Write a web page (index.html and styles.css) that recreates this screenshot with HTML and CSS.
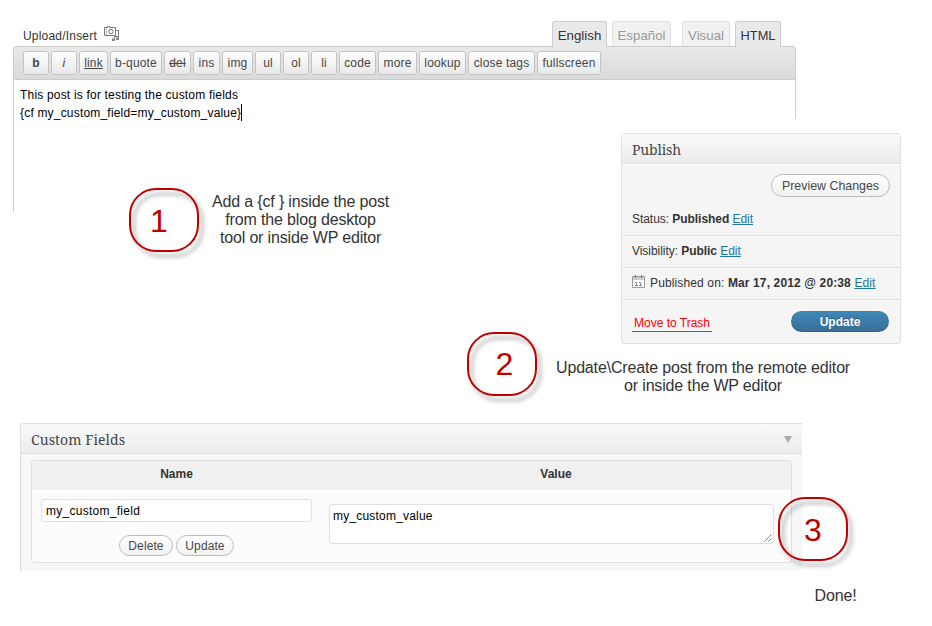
FILE: index.html
```html
<!DOCTYPE html>
<html lang="en">
<head>
<meta charset="utf-8">
<title>Custom fields</title>
<link rel="stylesheet" href="styles.css">
</head>
<body>
<section class="editor">
  <header class="editor-head">
    <div class="upload"><span class="upload-label">Upload/Insert</span>
      <svg class="media-icon" width="16" height="16" viewBox="0 0 16 16" fill="none" stroke="#777">
        <path d="M.5 1.500h3v-1h2v1h6v8h-11z"/><path d="M2.500 2v7" stroke="#bbb"/><circle cx="7" cy="5.500" r="2.200"/><path d="M12 4.500h2.500V13M10.500 14V10.500h4"/><path d="M8 12.500h3V15H8zM12 11.500h3V14h-3z" fill="#888" stroke="none"/>
      </svg>
    </div>
    <nav class="tabs">
      <a class="tab active t-en"><span>English</span></a><a class="tab t-es"><span>Español</span></a><a class="tab t-vis"><span>Visual</span></a><a class="tab active t-html"><span>HTML</span></a>
    </nav>
  </header>
  <div class="toolbar">
    <button class="q w26 bold"><span>b</span></button><button class="q w26 ital"><span>i</span></button><button class="q w29 under"><span>link</span></button><button class="q w52"><span>b-quote</span></button><button class="q w27 strike"><span>del</span></button><button class="q w27"><span>ins</span></button><button class="q w31"><span>img</span></button><button class="q w26"><span>ul</span></button><button class="q w26"><span>ol</span></button><button class="q w26"><span>li</span></button><button class="q w37"><span>code</span></button><button class="q w39"><span>more</span></button><button class="q w47"><span>lookup</span></button><button class="q w67"><span>close tags</span></button><button class="q w64"><span>fullscreen</span></button>
  </div>
  <div class="content">
    <div><span class="line1">This post is for testing the custom fields</span></div>
    <div><span class="line2">{cf my_custom_field=my_custom_value}</span><i class="caret"></i></div>
  </div>
</section>

<section class="middle">
  <div class="step-one">
    <div class="badge"><span>1</span></div>
    <p class="caption">Add a {cf } inside the post<br>from the blog desktop<br>tool or inside WP editor</p>
  </div>
  <aside class="publish">
    <h3><span>Publish</span></h3>
    <div class="row status">
      <button class="pill preview"><span>Preview Changes</span></button>
      <div><span class="s-status">Status: <b>Published</b> <a>Edit</a></span></div>
    </div>
    <div class="row"><span class="s-vis">Visibility: <b>Public</b> <a>Edit</a></span></div>
    <div class="row">
      <svg class="cal" width="13" height="13" viewBox="0 0 13 13"><path d="M.5 1.500h12v11H.5z" fill="#fff" stroke="#999"/><path d="M1 2h11v3H1z" fill="#ccc"/><path d="M3.500 0v3M9.500 0v3" stroke="#777"/><path d="M3 7.500h1.500V10M3 10.500h3M7 7.500h1.500V10M7 10.500h3" stroke="#888" fill="none"/></svg>
      <span class="s-pub">Published on: <b>Mar 17, 2012 @ 20:38</b> <a>Edit</a></span>
    </div>
    <div class="actions"><a class="trash"><span>Move to Trash</span></a><button class="primary"><span>Update</span></button></div>
  </aside>
  <div class="badge step-two"><span>2</span></div>
  <p class="caption caption-two"><span>Update\Create post from the remote editor</span><br>or inside the WP editor</p>
</section>

<section class="fields">
  <h3><span>Custom Fields</span><i class="toggle"></i></h3>
  <div class="table">
    <div class="th"><span>Name</span></div><div class="th"><span>Value</span></div>
    <div class="name-cell">
      <div class="input"><span>my_custom_field</span></div>
      <div class="buttons"><button class="pill delete"><span>Delete</span></button><button class="pill update"><span>Update</span></button></div>
    </div>
    <div class="value-cell">
      <div class="area"><span>my_custom_value</span><svg class="grip" width="8" height="8" viewBox="0 0 8 8"><path d="M.5 7.500l7-7M4.500 7.500l3-3" stroke="#555" stroke-dasharray="1.400 .5"/></svg></div>
    </div>
  </div>
  <div class="badge step-three"><span>3</span></div>
</section>
<p class="caption done">Done!</p>
</body>
</html>
```

FILE: styles.css
```css
* { box-sizing: border-box; }
body { margin: 0; width: 932px; height: 626px; overflow: hidden; background: #fff; color: #333; font: 12px/18px "Liberation Sans", Arial, sans-serif; }
p, h3 { margin: 0; }
button { font: inherit; color: inherit; padding: 0; margin: 0; }
span { white-space: nowrap; }

.editor { margin-left: 13px; width: 783px; height: 119px; padding-top: 21px; }
.editor-head { display: flex; justify-content: space-between; height: 25px; padding: 0 15px 0 10px; }
.upload { display: flex; gap: 7px; padding-top: 5px; }
.upload-label { letter-spacing: .2px; padding-top: 1px; }
.media-icon { display: block; }
.tabs { display: flex; }
.tab { height: 25px; border: 1px solid #dfdfdf; border-bottom: 0; border-radius: 3px 3px 0 0; background: #f1f1f1; color: #999; font-size: 13.3px; line-height: 27px; text-align: center; }
.tab.active { height: 26px; border-color: #ccc; background: #e9e9e9; color: #333; position: relative; }
.t-en { width: 55px; margin-right: 5px; }
.t-es { width: 59px; margin-right: 11px; }
.t-vis { width: 48px; margin-right: 5px; }
.t-html { width: 46px; }
.tab.t-html { font-size: 12.8px; }
.toolbar { display: flex; gap: 2px; height: 34px; padding: 4px 9px; border: 1px solid #ccc; border-radius: 3px 3px 0 0; background: linear-gradient(#e9e9e9, #dadada); }
.q { height: 24px; border: 1px solid #c3c3c3; border-radius: 3px; background: linear-gradient(#fff, #e8e8e8); color: #464646; line-height: 22px; letter-spacing: .17px; text-align: center; }
.w26 { width: 26px; } .w27 { width: 27px; } .w29 { width: 29px; } .w31 { width: 31px; } .w37 { width: 37px; }
.w39 { width: 39px; } .w47 { width: 47px; } .w52 { width: 52px; } .w64 { width: 64px; } .w67 { width: 67px; }
.bold { font-weight: bold; } .ital { font-style: italic; }
.under { text-decoration: underline; } .strike { text-decoration: line-through; }
.content { height: 39px; padding: 6px 6px 0; border: solid #ccc; border-width: 0 1px; color: #000; letter-spacing: .19px; }
.caret { display: inline-block; width: 1px; height: 17px; background: #000; vertical-align: middle; margin-top: -2px; }

.middle { position: relative; display: grid; grid-template-columns: 454px 89px 65px 280px; grid-template-rows: 212px 27px 65px; margin-left: 13px; height: 304px; }
.middle::before { content: ""; position: absolute; left: 0; top: 0; width: 1px; height: 94px; background: #ccc; }
.badge { position: relative; width: 70px; height: 64px; display: flex; justify-content: center; padding-right: 10px; color: #c00000; font-size: 32px; line-height: 67px; }
.badge::before { content: ""; position: absolute; inset: 0; border: 2px solid #c00000; border-radius: 27px; filter: drop-shadow(4px 5px 2px rgba(0,0,0,.38)); }
.caption { color: #333; font-size: 16px; line-height: 18px; letter-spacing: -.16px; text-align: center; }
.step-one { grid-area: 1 / 1; display: flex; gap: 13px; padding: 69px 0 0 116px; }
.step-one .caption { padding-top: 5px; }
.publish { grid-area: 1 / 4 / 3 / 5; margin-top: 14px; height: 211px; border: 1px solid #dfdfdf; border-radius: 3px; background: #f5f5f5; }
h3 { display: flex; align-items: center; height: 30px; border-bottom: 1px solid #dfdfdf; background: linear-gradient(#f9f9f9, #ececec); padding: 3px 10px 0; color: #464646; font: 14px/20px "Noto Serif", "Liberation Serif", Georgia, serif; }
.publish h3 { letter-spacing: -.15px; }
.row { display: flex; height: 32px; padding: 5px 10px; border-top: 1px solid #fff; border-bottom: 1px solid #dfdfdf; }
.row.status { flex-direction: column; height: 72px; padding-top: 9px; }
.row a { color: #21759b; text-decoration: underline; }
.s-status, .s-vis { letter-spacing: -.05px; }
.s-pub { letter-spacing: .13px; }
.pill { height: 23px; border: 1px solid #bbb; border-radius: 12px; background: linear-gradient(#fff, #f2f2f2); color: #464646; line-height: 21px; text-align: center; }
.preview { align-self: flex-end; width: 119px; font-size: 12.4px; line-height: 22px; margin-bottom: 13px; }
.cal { margin: 1px 5px 0 0; }
.actions { display: flex; justify-content: space-between; align-items: flex-start; border-top: 1px solid #fff; padding: 10px 11px 0 10px; }
.trash { width: 80px; margin-top: 3px; padding-left: 2px; height: 18px; line-height: 18px; color: #f00; border-bottom: 1px solid #f21; }
.primary { width: 98px; height: 21px; border: 1px solid; border-color: #3d83b0 #356f9a #2f658c; border-radius: 11px; background: linear-gradient(#3f88b8, #386e96); color: #fff; font-weight: bold; line-height: 20px; text-shadow: 0 -1px 0 rgba(0,0,0,.3); }
.step-two { grid-area: 2 / 2 / 4 / 3; padding-right: 0; padding-left: 5px; }
.step-two::before { top: 1px; bottom: -1px; }
.caption-two { grid-area: 3 / 3 / 4 / 5; width: 294px; padding-top: 1px; letter-spacing: -.16px; }

.fields { position: relative; width: 782px; height: 148px; margin-left: 20px; border: 1px solid #dfdfdf; border-width: 1px 0 0 1px; border-radius: 3px 0 0; background: #f7f7f7; }
.fields h3 { justify-content: space-between; letter-spacing: .07px; }
.toggle { width: 0; margin-top: -2px; border: 4px solid transparent; border-top: 7px solid #aaa; border-bottom: 0; }
.table { display: grid; grid-template-columns: 289px 470px; grid-template-rows: 29px 72px; width: 761px; height: 103px; margin: 6px 0 0 10px; border: 1px solid #dfdfdf; border-radius: 3px; background: #fcfcfc; }
.th { background: #f0f0f0; font-weight: bold; text-align: center; line-height: 26px; }
.name-cell { padding: 9px 9px 0; }
.input, .area { border: 1px solid #dfdfdf; border-radius: 3px; background: #fff; color: #000; }
.input { width: 271px; height: 23px; padding: 2px 4px; letter-spacing: .27px; }
.buttons { display: flex; justify-content: center; gap: 3px; margin-top: 13px; }
.buttons .pill { height: 21px; line-height: 20px; letter-spacing: .1px; }
.delete { width: 54px; } .update { width: 58px; }
.value-cell { padding: 14px 0 0 8px; }
.area { position: relative; width: 445px; height: 40px; padding: 2px 3px; letter-spacing: .2px; }
.grip { position: absolute; right: 1px; bottom: 1px; }
.step-three { position: absolute; left: 757px; top: 73px; padding-right: 0; }
.done { margin: 16px 0 0 814px; width: 43px; }
```
